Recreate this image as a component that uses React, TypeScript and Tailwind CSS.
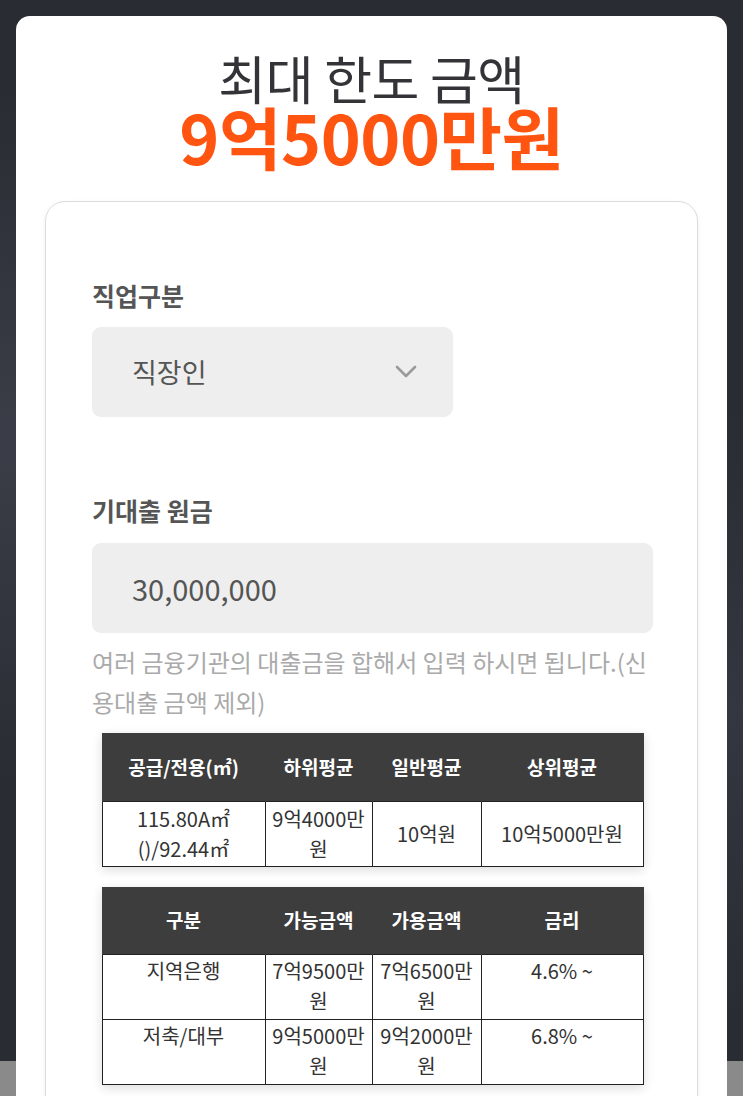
import React from 'react'

const FONT = "font-['Noto_Sans_CJK_KR','Noto_Sans',sans-serif]"

const priceHead = ['공급/전용(㎡)', '하위평균', '일반평균', '상위평균']
const priceRows: string[][] = [
  ['115.80A㎡ ()/92.44㎡', '9억4000만원', '10억원', '10억5000만원'],
]

const loanHead = ['구분', '가능금액', '가용금액', '금리']
const loanRows: string[][] = [
  ['지역은행', '7억9500만원', '7억6500만원', '4.6% ~'],
  ['저축/대부', '9억5000만원', '9억2000만원', '6.8% ~'],
]

function DataTable({
  head,
  rows,
  align,
}: {
  head: string[]
  rows: string[][]
  align: 'middle' | 'top'
}) {
  return (
    <table className="mx-auto w-[541px] table-fixed border-collapse shadow-[0_3px_10px_rgba(0,0,0,0.14)]">
      <colgroup>
        <col className="w-[163px]" />
        <col className="w-[107px]" />
        <col className="w-[109px]" />
        <col className="w-[162px]" />
      </colgroup>
      <thead>
        <tr className="h-[68px] bg-[#3d3d3d]">
          {head.map((h) => (
            <th
              key={h}
              className="border-x border-[#3d3d3d] px-1 text-center text-[19px] font-bold leading-[28px] text-white"
            >
              {h}
            </th>
          ))}
        </tr>
      </thead>
      <tbody>
        {rows.map((row) => (
          <tr key={row[0]} className="h-[65px]">
            {row.map((c, i) => (
              <td
                key={i}
                className={`border-[1.5px] border-[#222] px-[4px] py-[1px] text-center text-[20px] leading-[30px] text-[#333] ${
                  align === 'top' ? 'align-top' : 'align-middle'
                }`}
              >
                {c}
              </td>
            ))}
          </tr>
        ))}
      </tbody>
    </table>
  )
}

export default function App() {
  return (
    <div
      className={`relative h-[1096px] overflow-hidden bg-[#2a2c33] ${FONT}`}
    >
      <div className="absolute inset-0 bg-[radial-gradient(circle_at_0%_40%,rgba(90,95,110,0.35),transparent_35%),radial-gradient(circle_at_100%_65%,rgba(70,75,90,0.35),transparent_30%)]" />
      <div className="absolute inset-x-0 bottom-0 h-[35px] bg-[#8a8a8a]" />

      <div className="relative mx-4 mt-4 h-[1200px] rounded-t-[14px] bg-white px-[29px] pt-[37px]">
        <h1 className="text-center text-[52px] font-normal leading-[50px] tracking-[-0.5px] text-[#333338]">
          최대 한도 금액
        </h1>
        <p className="text-center text-[68px] font-bold leading-[66px] tracking-[-0.5px] text-[#ff5511]">
          9억5000만원
        </p>

        <section className="mt-[32px] rounded-[20px] border border-[#dcdcdc] bg-white px-[46px] pt-[77px] pb-10 shadow-[0_2px_6px_rgba(0,0,0,0.05)]">
          <label className="block text-[25px] font-bold leading-[32px] text-[#555]">
            직업구분
          </label>
          <div className="mt-4 flex h-[90px] w-[361px] items-center justify-between rounded-[9px] bg-[#eeeeee] pr-[36px] pl-[40px]">
            <span className="text-[27px] leading-[36px] text-[#555]">
              직장인
            </span>
            <svg width="22" height="14" viewBox="0 0 22 14" fill="none">
              <polyline
                points="2,2 11,11 20,2"
                stroke="#9a9a9a"
                strokeWidth="2.6"
                strokeLinecap="round"
                strokeLinejoin="round"
              />
            </svg>
          </div>

          <label className="mt-[77px] block text-[25px] font-bold leading-[32px] text-[#555]">
            기대출 원금
          </label>
          <div className="mt-[17px] flex h-[90px] w-[561px] items-center rounded-[9px] bg-[#eeeeee] pl-[40px]">
            <span className="text-[29px] leading-[36px] text-[#555]">
              30,000,000
            </span>
          </div>

          <p className="mt-[9px] w-[561px] break-all text-[24px] leading-[40px] text-[#aaaaaa]">
            여러 금융기관의 대출금을 합해서 입력 하시면 됩니다.(신용대출 금액
            제외)
          </p>

          <div className="mt-[11px] w-[561px]">
            <DataTable head={priceHead} rows={priceRows} align="middle" />
            <div className="h-5" />
            <DataTable head={loanHead} rows={loanRows} align="top" />
          </div>
        </section>
      </div>
    </div>
  )
}
